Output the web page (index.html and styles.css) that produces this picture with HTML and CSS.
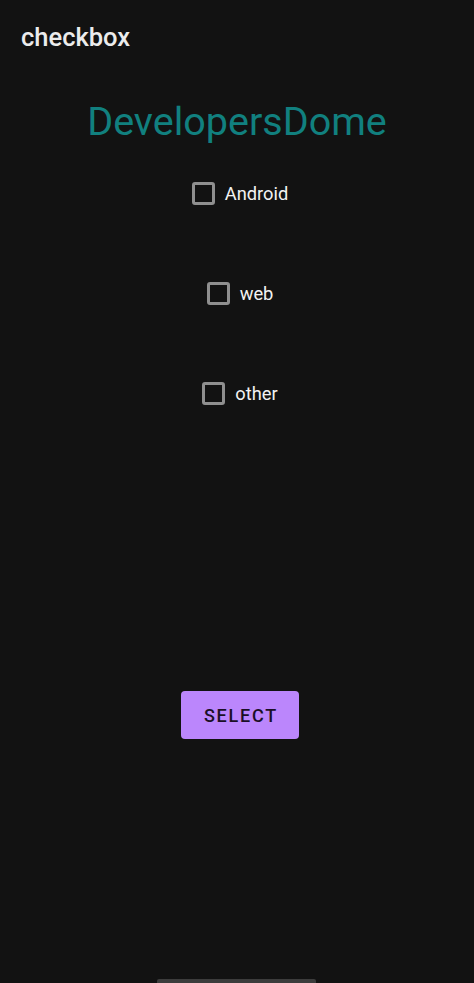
FILE: index.html
```html
<!DOCTYPE html>
<html lang="en">
<head>
<meta charset="utf-8">
<title>checkbox</title>
<link rel="stylesheet" href="styles.css">
</head>
<body>
<div class="screen">
  <header class="appbar">
    <h1 class="appbar-title">checkbox</h1>
  </header>
  <main class="content">
    <h2 class="brand">DevelopersDome</h2>
    <label class="check-row first">
      <span class="box"></span>
      <span class="label">Android</span>
    </label>
    <label class="check-row">
      <span class="box"></span>
      <span class="label">web</span>
    </label>
    <label class="check-row">
      <span class="box"></span>
      <span class="label">other</span>
    </label>
    <button class="select-btn" type="button">SELECT</button>
  </main>
  <div class="gesture-bar"></div>
</div>
</body>
</html>
```

FILE: styles.css
```css
html, body {
  margin: 0;
  padding: 0;
  background: #121212;
}

body {
  font-family: Roboto, "Noto Sans", "Liberation Sans", sans-serif;
  color: #ececec;
}

.screen {
  position: relative;
  width: 474px;
  height: 983px;
  overflow: hidden;
  background: #121212;
}

.appbar {
  height: 64px;
  display: flex;
  align-items: center;
  padding-left: 21px;
  padding-top: 10px;
  box-sizing: border-box;
}

.appbar-title {
  margin: 0;
  font-size: 25.5px;
  font-weight: 500;
  color: #ececec;
}

.content {
  display: flex;
  flex-direction: column;
  align-items: center;
}

.brand {
  margin: 34px 0 0 0;
  font-size: 39.5px;
  font-weight: 400;
  line-height: normal;
  color: #11807f;
}

.check-row {
  display: flex;
  align-items: center;
  gap: 10px;
  height: 48px;
  margin-top: 52px;
  padding-left: 6px;
}

.check-row.first {
  margin-top: 24px;
}

.box {
  width: 23px;
  height: 23px;
  box-sizing: border-box;
  border: 3px solid #8f8f8f;
  border-radius: 3px;
}

.label {
  font-size: 18.3px;
  line-height: normal;
  color: #f2f2f2;
}

.select-btn {
  margin-top: 274px;
  margin-left: 6px;
  width: 118px;
  height: 48px;
  border: none;
  border-radius: 4px;
  background: #bb86fc;
  color: #1a0f26;
  font-family: Roboto, "Noto Sans", "Liberation Sans", sans-serif;
  font-size: 18px;
  font-weight: 500;
  letter-spacing: 0.1em;
  padding: 0 0 0 2px;
}

.gesture-bar {
  position: absolute;
  left: 157px;
  bottom: 0;
  width: 159px;
  height: 4px;
  border-radius: 2px 2px 0 0;
  background: #3c3c3c;
}
```
